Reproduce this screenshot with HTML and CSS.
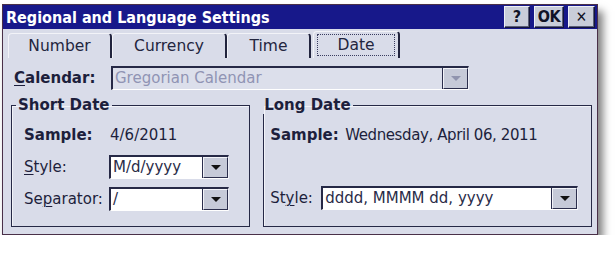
FILE: index.html
```html
<!DOCTYPE html>
<html lang="en">
<head>
    <meta charset="UTF-8">
    <title>Regional and Language Settings</title>
    <link rel="stylesheet" href="styles.css">
</head>
<body>

<div class="window">
    <div class="titlebar">
        <span class="title">Regional and Language Settings</span>
        <div class="caption-buttons">
            <button class="cap-btn help">?</button>
            <button class="cap-btn ok">OK</button>
            <button class="cap-btn close">&#x2715;</button>
        </div>
    </div>

    <div class="tabs">
        <div class="tab tab-number">Number</div>
        <div class="tab tab-currency">Currency</div>
        <div class="tab tab-time">Time</div>
        <div class="tab tab-date active"><span class="focus">Date</span></div>
    </div>

    <div class="panel">
        <div class="calendar-row">
            <label class="label-bold"><u>C</u>alendar:</label>
            <div class="combo combo-calendar disabled">
                <span class="combo-text">Gregorian Calendar</span>
                <span class="combo-btn"><span class="arrow"></span></span>
            </div>
        </div>

        <div class="groups">
            <fieldset class="group group-short">
                <legend>Short Date</legend>
                <div class="sample-row">
                    <span class="label-bold">Sample:</span>
                    <span class="sample">4/6/2011</span>
                </div>
                <div class="field-row">
                    <label><u>S</u>tyle:</label>
                    <div class="combo combo-small">
                        <span class="combo-text">M/d/yyyy</span>
                        <span class="combo-btn"><span class="arrow"></span></span>
                    </div>
                </div>
                <div class="field-row">
                    <label>Se<u>p</u>arator:</label>
                    <div class="combo combo-small">
                        <span class="combo-text">/</span>
                        <span class="combo-btn"><span class="arrow"></span></span>
                    </div>
                </div>
            </fieldset>

            <fieldset class="group group-long">
                <legend>Long Date</legend>
                <div class="sample-row">
                    <span class="label-bold">Sample:</span>
                    <span class="sample sample-long">Wednesday, April 06, 2011</span>
                </div>
                <div class="field-row field-row-long">
                    <label>St<u>y</u>le:</label>
                    <div class="combo combo-long">
                        <span class="combo-text">dddd, MMMM dd, yyyy</span>
                        <span class="combo-btn"><span class="arrow"></span></span>
                    </div>
                </div>
            </fieldset>
        </div>
    </div>
</div>

</body>
</html>
```

FILE: styles.css
```css
/* Janela de configuracoes */
body {
    margin: 0;
    padding: 0;
    background-color: #ffffff;
    font-family: "DejaVu Sans", sans-serif;
    font-size: 15px;
    color: #1d1f3c;
}

u {
    text-decoration-thickness: 1px;
    text-underline-offset: 2px;
}

.window {
    margin: 4px 0 0 2px;
    width: 596px;
    height: 231px;
    box-sizing: border-box;
    border: 1px solid #4a3048;
    background-color: #d9dce9;
    box-shadow: 5px 7px 8px rgba(0, 0, 0, 0.5);
    display: flex;
    flex-direction: column;
}

/* Barra de titulo */
.titlebar {
    height: 24px;
    background-color: #17188a;
    display: flex;
    align-items: center;
    padding: 0 2px 0 3px;
}

.title {
    color: #ffffff;
    font-family: "DejaVu Sans Condensed", "DejaVu Sans", sans-serif;
    font-weight: bold;
    font-size: 16px;
    flex: 1;
}

.caption-buttons {
    display: flex;
    gap: 4px;
}

.cap-btn {
    height: 22px;
    width: 26px;
    padding: 0;
    background-color: #c9cdd9;
    border: 1px solid #14153a;
    border-top-color: #eef0f6;
    border-left-color: #eef0f6;
    box-shadow: inset -1px -1px 0 #5a5e78;
    font-family: "DejaVu Sans Condensed", "DejaVu Sans", sans-serif;
    font-weight: bold;
    font-size: 16px;
    color: #111326;
    line-height: 18px;
}

.cap-btn.ok {
    width: 30px;
    letter-spacing: -0.5px;
}

.cap-btn.close {
    width: 27px;
    font-weight: normal;
    font-size: 15px;
}

/* Abas */
.tabs {
    height: 29px;
    display: flex;
    align-items: flex-end;
    padding-left: 5px;
}

.tab {
    height: 25px;
    box-sizing: border-box;
    border-top: 1px solid #f2f3f8;
    border-left: 1px solid #f2f3f8;
    border-right: 2px solid #22243e;
    border-radius: 4px 4px 0 0;
    display: flex;
    align-items: center;
    justify-content: center;
    color: #23253e;
    font-size: 15.5px;
}

.tab-number { width: 104px; }
.tab-currency { width: 115px; }
.tab-time { width: 84px; }

.tab-date {
    width: 87px;
    height: 27px;
    margin-left: 2px;
    padding: 2px 3px;
}

.tab-date .focus {
    flex: 1;
    align-self: stretch;
    display: flex;
    align-items: center;
    justify-content: center;
    border: 1px dotted #3a3d60;
}

/* Painel */
.panel {
    padding: 0 5px 0 8px;
    flex: 1;
    display: flex;
    flex-direction: column;
}

.label-bold {
    font-weight: bold;
}

.calendar-row {
    display: flex;
    align-items: center;
    margin-top: 8px;
    padding-left: 3px;
}

.calendar-row label {
    width: 97px;
}

/* Caixas de combinacao */
.combo {
    height: 24px;
    box-sizing: border-box;
    display: flex;
    align-items: stretch;
    background-color: #ffffff;
    border-top: 2px solid #262946;
    border-left: 2px solid #262946;
    border-right: 1px solid #eef0f7;
    border-bottom: 1px solid #ffffff;
}

.combo-text {
    flex: 1;
    padding-left: 2px;
    line-height: 20px;
    color: #2a2c48;
    white-space: nowrap;
    overflow: hidden;
}

.combo-btn {
    width: 23px;
    background-color: #c6cad8;
    border: 1px solid #2b2e4c;
    border-top-color: #f3f4f9;
    border-left-color: #f3f4f9;
    box-shadow: -1px 0 0 #2b2e4c;
    display: flex;
    align-items: center;
    justify-content: center;
}

.arrow {
    width: 0;
    height: 0;
    border-left: 5px solid transparent;
    border-right: 5px solid transparent;
    border-top: 5px solid #111111;
}

.combo-calendar {
    width: 358px;
}

.combo.disabled {
    background-color: #dcdfeb;
}

.combo.disabled .combo-text {
    color: #9094b4;
}

.combo.disabled .arrow {
    border-top-color: #9094ae;
}

.combo-small {
    width: 120px;
}

.combo-long {
    width: 257px;
}

/* Grupos */
.groups {
    display: flex;
    gap: 13px;
    margin-top: 6px;
    height: 131px;
}

.group {
    margin: 0;
    padding: 0 0 0 12px;
    border: 1px solid #262946;
    box-shadow: inset 1px 1px 0 #f2f3f8;
    min-width: 0;
    box-sizing: border-box;
}

.group legend {
    font-weight: bold;
    padding: 0 2px 0 2px;
    margin-left: -8px;
    line-height: 18px;
}

.group-short {
    width: 240px;
}

.group-long {
    width: 330px;
    padding-left: 6px;
}

.sample-row {
    display: flex;
    align-items: center;
    margin-top: 11px;
    height: 20px;
}

.group-short .sample-row .label-bold {
    width: 86px;
}

.group-long .sample-row .label-bold {
    width: 75px;
}

.sample-long {
    letter-spacing: -0.4px;
}

.field-row {
    display: flex;
    align-items: center;
    margin-top: 10px;
}

.field-row + .field-row {
    margin-top: 8px;
}

.group-short .field-row label {
    width: 85px;
}

.field-row-long {
    margin-top: 41px;
}

.field-row-long label {
    width: 51px;
}
```
